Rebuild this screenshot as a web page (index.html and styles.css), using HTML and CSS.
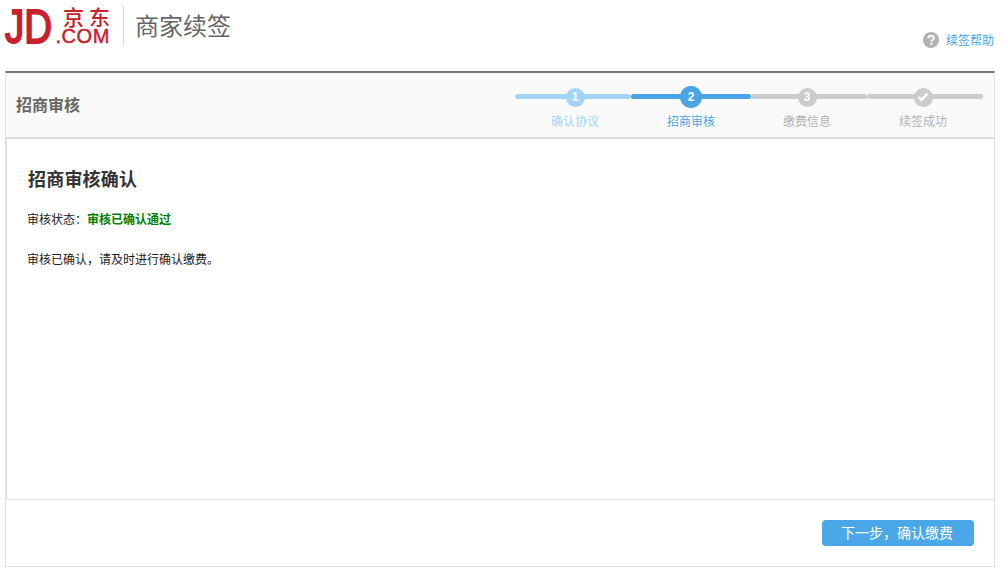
FILE: index.html
```html
<!DOCTYPE html>
<html lang="zh-CN">
<head>
<meta charset="utf-8">
<title>商家续签</title>
<link rel="stylesheet" href="styles.css">
</head>
<body>
<header class="top">
  <div class="logo">
    <span class="logo-jd">JD</span>
    <span class="logo-side">
      <span class="logo-cn">京东</span>
      <span class="logo-com">.COM</span>
    </span>
  </div>
  <div class="product">商家续签</div>
  <a class="help">
    <svg class="help-icon" width="16" height="16" viewBox="0 0 16 16"><circle cx="8" cy="8" r="8" fill="#b3b3b3"/><path d="M5.3 6.2C5.4 4.6 6.5 3.7 8.1 3.7c1.600 0 2.700.9 2.700 2.200 0 1.100-.6 1.600-1.300 2.100-.7.5-1 .8-1 1.600" fill="none" stroke="#fff" stroke-width="1.900"/><rect x="7.300" y="10.800" width="2" height="2" fill="#fff"/></svg>
    <span>续签帮助</span>
  </a>
</header>
<main class="frame">
  <div class="bar">
    <h2 class="bar-title">招商审核</h2>
    <ol class="steps">
      <li class="step step-done step-a"><div class="track"><span class="dot">1</span></div><div class="label">确认协议</div></li>
      <li class="step step-now"><div class="track"><span class="dot">2</span></div><div class="label">招商审核</div></li>
      <li class="step step-b"><div class="track"><span class="dot">3</span></div><div class="label">缴费信息</div></li>
      <li class="step step-b"><div class="track"><span class="dot"><svg width="12" height="10" viewBox="0 0 12 10"><path d="M1.500 5l3 3 6-6.500" fill="none" stroke="#fff" stroke-width="2.400"/></svg></span></div><div class="label">续签成功</div></li>
    </ol>
  </div>
  <section class="content">
    <h1 class="heading">招商审核确认</h1>
    <p class="status">审核状态：<strong class="ok">审核已确认通过</strong></p>
    <p class="note">审核已确认，请及时进行确认缴费。</p>
  </section>
  <footer class="actions">
    <button class="next" type="button">下一步，确认缴费</button>
  </footer>
</main>
</body>
</html>
```
FILE: styles.css
```css
* { box-sizing: border-box; }
html, body { margin: 0; padding: 0; }
body {
  background: #fff;
  font-family: "Liberation Sans", "Noto Sans CJK SC", sans-serif;
  font-size: 12px;
  color: #333;
  width: 1001px;
  height: 574px;
  overflow: hidden;
}
.top {
  height: 71px;
  padding: 6px 7px 0 5px;
  display: flex;
  align-items: flex-start;
}
.logo {
  display: flex;
  width: 119px;
  height: 40px;
  padding-right: 13px;
  border-right: 1px solid #ddd;
  color: #c9202f;
}
.logo-jd {
  font-family: "Liberation Sans", sans-serif;
  font-size: 48px;
  line-height: 40px;
  flex: none;
  height: 40px;
  -webkit-text-stroke: 2px #c9202f;
  transform: scaleX(0.8);
  transform-origin: left center;
  margin-right: -12px;
  margin-top: 1px;
}
.logo-side {
  display: flex;
  flex-direction: column;
  align-items: flex-end;
  flex: 1;
  min-width: 0;
}
.logo-cn {
  font-family: "Noto Sans CJK SC", sans-serif;
  font-size: 21px;
  line-height: 21px;
  font-weight: 500;
  letter-spacing: 5px;
  margin-right: -5px;
}
.logo-com {
  font-family: "Liberation Sans", sans-serif;
  font-size: 20px;
  line-height: 19px;
  letter-spacing: 0.600px;
  -webkit-text-stroke: 0.500px #c9202f;
  white-space: nowrap;
}
.product {
  margin: 3px 0 0 11px;
  font-family: "Noto Sans CJK SC", sans-serif;
  font-size: 24px;
  line-height: 32px;
  color: #666;
}
.help {
  margin: 25px 0 0 auto;
  display: flex;
  align-items: center;
  gap: 7px;
  color: #49a4e5;
  font-size: 12px;
  line-height: 18px;
}
.help span { position: relative; top: 1px; }
.help-icon { display: block; }
.frame {
  margin-left: 5px;
  width: 990px;
  height: 496px;
  border-top: 2px solid #777;
  border-right: 1px solid #e0e0e0;
  border-left: 1px solid #e0e0e0;
  border-bottom: 1px solid #e0e0e0;
  display: flex;
  flex-direction: column;
}
.bar {
  height: 66px;
  flex: none;
  background: #fafafa;
  border-bottom: 2px solid #e0e0e0;
  display: flex;
  justify-content: space-between;
  padding: 0 11px 0 10px;
}
.bar-title {
  margin: 0;
  font-size: 16px;
  line-height: 66px;
  font-weight: bold;
  color: #666;
  height: 64px;
}
.steps {
  list-style: none;
  margin: 12px 0 0;
  padding: 0;
  display: flex;
  width: 468px;
}
.step { width: 116px; text-align: center; color: #b3b3b3; --c: #ccc; }
.step-done { color: #a3d4f7; --c: #a3d4f7; }
.step-now { width: 120px; color: #49a4e5; --c: #49a4e5; }
.step-a { padding-left: 4px; }
.step-b { padding-right: 4px; }
.track {
  position: relative;
  height: 22px;
  display: flex;
  justify-content: center;
  align-items: center;
}
.track::before {
  content: "";
  position: absolute;
  top: 9px;
  height: 5px;
  left: 0;
  right: 0;
  background: var(--c);
  border-radius: 3px;
}
.step-a .track::before { left: -4px; }
.step-b .track::before { right: -4px; }
.dot {
  position: relative;
  top: 1px;
  width: 19px;
  height: 19px;
  border-radius: 50%;
  background: var(--c);
  color: #fff;
  font-weight: bold;
  font-size: 12px;
  line-height: 19px;
  display: flex;
  justify-content: center;
  align-items: center;
}
.step-now .dot { width: 22px; height: 22px; }
.label { margin-top: 6px; font-size: 12px; line-height: 18px; }
.content {
  flex: 1;
  border-left: 2px solid #e0e0e0;
  border-bottom: 1px solid #e0e0e0;
  margin-left: -1px;
  padding: 28px 20px 0;
}
.heading {
  margin: 0 0 0 1px;
  font-size: 18px;
  line-height: 26px;
  font-weight: bold;
  letter-spacing: 0.200px;
  color: #333;
}
.status {
  margin: 18px 0 0;
  line-height: 18px;
  color: #222;
}
.ok { color: #008000; font-weight: bold; }
.note {
  margin: 22px 0 0;
  line-height: 18px;
  color: #222;
}
.actions {
  flex: none;
  height: 66px;
  padding: 20px 20px 0 0;
  display: flex;
  justify-content: flex-end;
  align-items: flex-start;
}
.next {
  width: 152px;
  height: 26px;
  border: 0;
  border-radius: 4px;
  background: #4ba8e8;
  color: #fff;
  font-family: inherit;
  font-size: 14px;
  line-height: 26px;
  padding: 0 2px 0 0;
}
```
